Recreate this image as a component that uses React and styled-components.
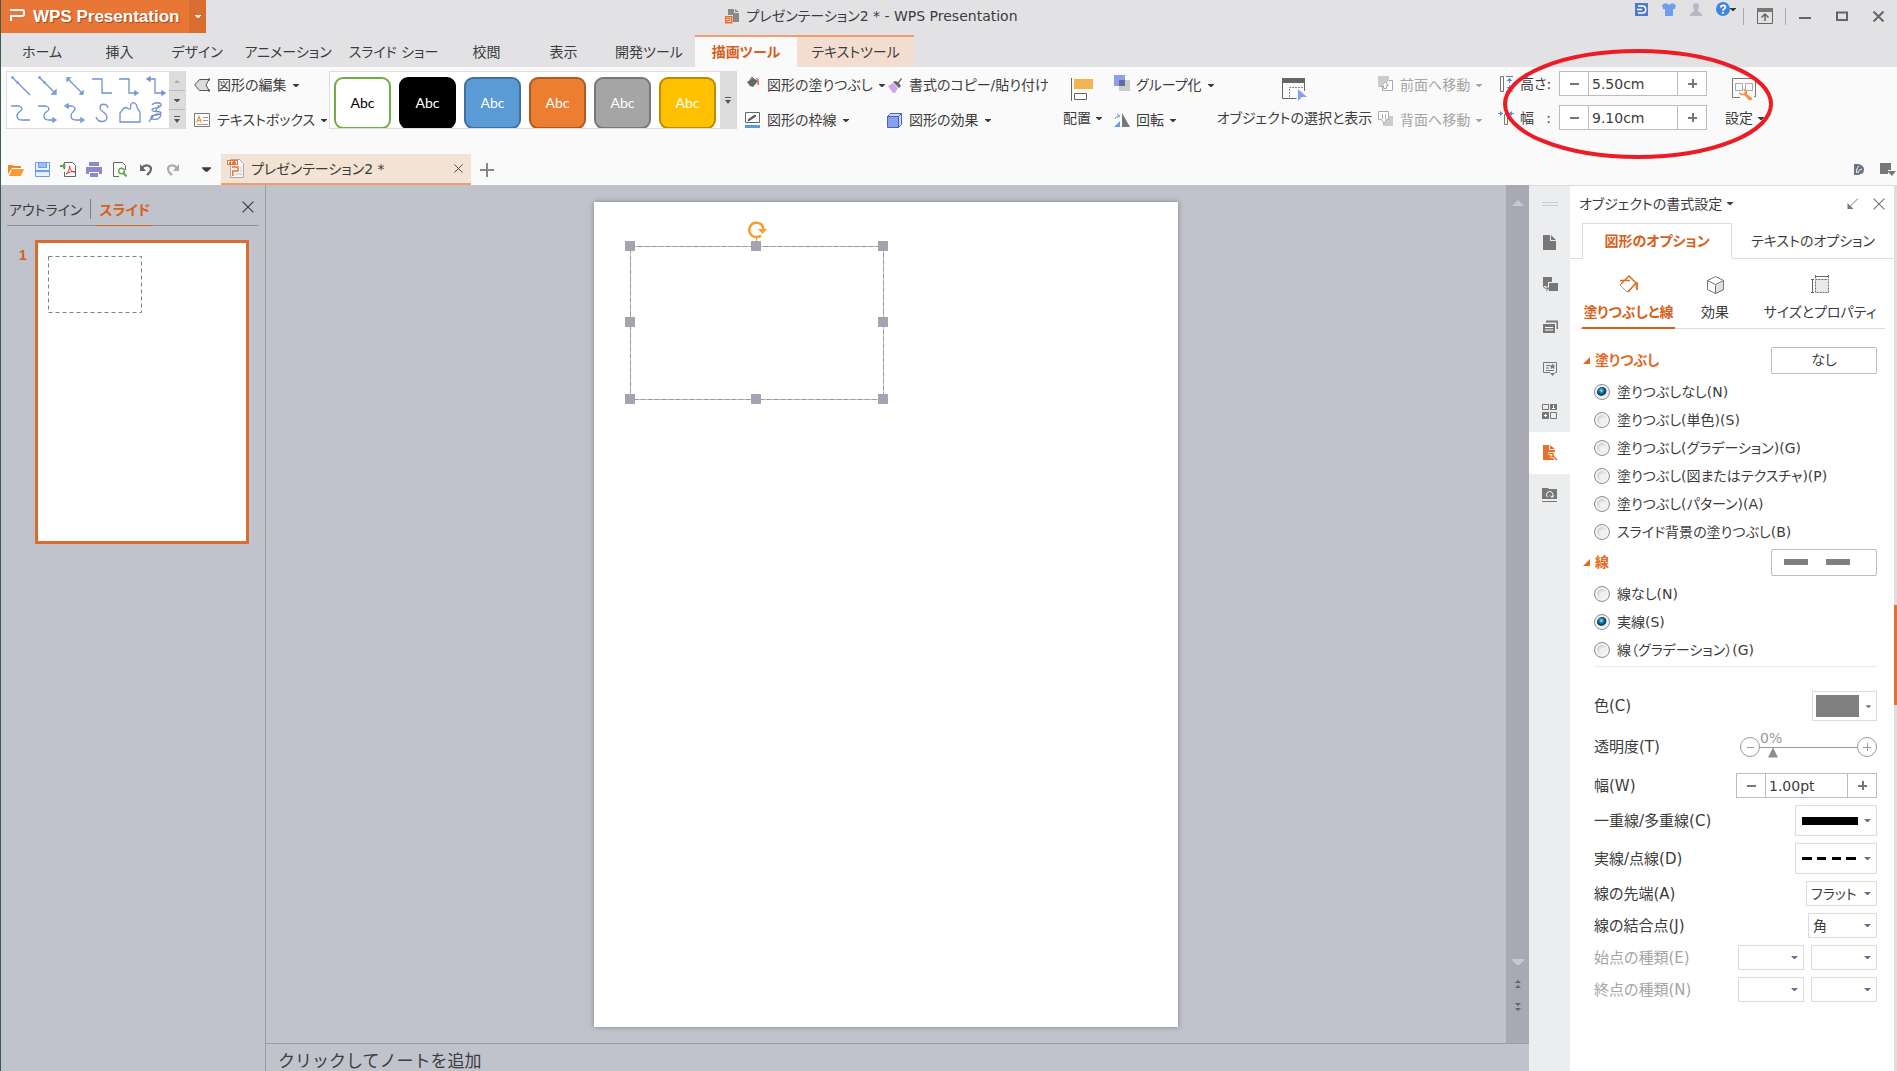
import React, { useState } from 'react';
import styled, { createGlobalStyle, css } from 'styled-components';

const GlobalStyle = createGlobalStyle`
	* {
		box-sizing: border-box;
	}
	body {
		margin: 0;
		background: #c0c3cc;
		color: #3c3c3c;
		font-family: 'DejaVu Sans', 'Noto Sans CJK JP', sans-serif;
		font-size: 14px;
		line-height: 20px;
		font-feature-settings: 'palt';
	}
	button,
	input,
	select {
		font: inherit;
		font-feature-settings: inherit;
		color: inherit;
		padding: 0;
		margin: 0;
		border: 0;
		border-radius: 0;
		background: none;
	}
	svg {
		display: block;
		flex: none;
	}
`;

const Window = styled.div`
	display: flex;
	flex-direction: column;
	height: 100vh;
	border-left: 1px solid #3e5c4c;
	overflow: hidden;
`;

/* title bar */

const TitleBar = styled.header`
	display: flex;
	height: 35px;
	background: #e2e2e4;
`;

const Brand = styled.button`
	display: flex;
	align-items: center;
	width: 205px;
	height: 33px;
	background: #e87636;
	color: white;
	font-family: 'Liberation Sans', sans-serif;
	font-weight: bold;
	font-size: 17px;
	text-shadow: 1px 1px 1px #a04a18;
`;

const BrandName = styled.span`
	flex: 1;
	padding-left: 8px;
	text-align: left;
	white-space: nowrap;
`;

const BrandMore = styled.span`
	display: flex;
	align-items: center;
	justify-content: center;
	width: 17px;
	height: 33px;
	background: #d96c2f;
`;

const WindowTitle = styled.h1`
	flex: 1;
	display: flex;
	align-items: center;
	justify-content: center;
	gap: 7px;
	margin: 0;
	padding: 0 98px 3px 0;
	font-size: 14px;
	font-weight: normal;
	white-space: nowrap;
`;

const AccountTools = styled.div`
	display: flex;
	gap: 14px;
	padding-top: 1px;
	height: 17px;
`;

const WindowButtons = styled.div`
	display: flex;
	align-items: center;
	height: 32px;
	padding-left: 7px;
`;

const WindowButton = styled.button`
	display: flex;
	align-items: center;
	justify-content: center;
	width: 37px;
	height: 24px;
	color: #666;
`;

const ModeButton = styled(WindowButton)`
	height: 17px;
	width: 43px;
	border: solid #aaa;
	border-width: 0 1px;
`;

const IconButton = styled.button`
	display: flex;
	align-items: center;
	justify-content: center;
`;

/* ribbon */

const Tabs = styled.nav`
	display: flex;
	height: 32px;
	background: #e2e2e4;
`;

const Tab = styled.button`
	width: ${({ $width }) => $width}px;
	border-top: 2px solid transparent;
	white-space: nowrap;

	${({ $context }) =>
		$context &&
		css`
			border-color: #ef9f6d;
			background: #f3ddd0;
		`}
	${({ $active }) =>
		$active &&
		css`
			background: #fafafa;
			color: #d8601a;
			font-weight: bold;
		`}
`;

const Ribbon = styled.div`
	display: flex;
	height: 87px;
	padding: 4px 0 0 5px;
	background: #fafafa;
`;

const Gallery = styled.div`
	display: flex;
	flex: none;
	height: 58px;
	margin-right: 8px;
	border: 1px solid #dcdcdc;
	background: white;
	overflow: hidden;
`;

const LineGrid = styled.div`
	display: grid;
	grid-template-columns: repeat(6, 27px);
	grid-template-rows: repeat(2, 27px);
	width: 162px;
	color: #6f93d2;
`;

const StyleRow = styled.div`
	display: flex;
	gap: 8px;
	width: 390px;
	padding: 5px 4px 0;
`;

const StyleSwatch = styled.button`
	flex: none;
	width: 57px;
	height: 52px;
	border: 2px solid ${({ $edge }) => $edge};
	border-radius: 9px;
	background: ${({ $fill }) => $fill};
	color: ${({ $ink }) => $ink || 'white'};
	font-family: Lato, sans-serif;
	font-size: 14px;
`;

const GalleryScroll = styled.div`
	display: flex;
	flex-direction: column;
	width: 16px;
	background: #dcdcdc;
`;

const ScrollStep = styled.button`
	flex: 1;
	display: flex;
	align-items: center;
	justify-content: center;
	color: ${({ $off }) => ($off ? '#aaa' : '#555')};

	& + & {
		border-top: 1px solid #bbb;
	}
`;

const Group = styled.div`
	display: flex;
	flex-direction: column;
	flex: none;
	gap: 7px;
	width: ${({ $width }) => $width}px;
	padding-left: ${({ $inset }) => $inset || 0}px;
`;

const Tool = styled.button`
	display: flex;
	align-items: center;
	gap: 6px;
	height: 28px;
	white-space: nowrap;
	color: ${({ disabled }) => (disabled ? '#a5a5a5' : 'inherit')};
`;

const BigTool = styled.button`
	display: flex;
	flex-direction: column;
	align-items: center;
	gap: 7px;
	flex: none;
	width: ${({ $width }) => $width}px;
	height: 60px;
	padding-top: 7px;
	white-space: nowrap;
`;

const BigToolLabel = styled.span`
	display: flex;
	align-items: center;
	gap: 5px;
`;

const SizeFields = styled.div`
	display: flex;
	flex-direction: column;
	flex: none;
	gap: 9px;
	width: 226px;
`;

const SizeField = styled.div`
	display: flex;
	align-items: center;
	gap: 6px;
`;

const SizeLabel = styled.label`
	display: flex;
	justify-content: space-between;
	width: 31px;
	margin-right: 2px;
	white-space: nowrap;
`;

const SpinBox = styled.span`
	display: flex;
	width: ${({ $width }) => $width}px;
	height: 25px;
	border: 1px solid #bcbcbc;
	background: white;

	& button {
		display: flex;
		align-items: center;
		justify-content: center;
		width: 28px;
		color: #777;
	}
	& input {
		flex: 1;
		min-width: 0;
		padding-left: 3px;
		border: solid #bcbcbc;
		border-width: 0 1px;
		outline: 0;
	}
`;

const Markup = styled.svg`
	position: absolute;
	left: 1501px;
	top: 47px;
	pointer-events: none;
`;

/* quick access bar */

const QuickBar = styled.div`
	display: flex;
	height: 31px;
	background: #fafafa;
`;

const QuickTools = styled.div`
	display: flex;
	align-items: center;
	width: 220px;
	padding-left: 2px;

	& button {
		width: 26px;
	}
	& button:last-child {
		margin-left: 8px;
	}
`;

const FileTab = styled.div`
	display: flex;
	align-items: center;
	gap: 6px;
	width: 250px;
	padding: 0 8px 0 6px;
	border-bottom: 2px solid #ef9f6d;
	background: #f2e3d4;
	white-space: nowrap;

	& button {
		margin-left: auto;
	}
`;

const AddTab = styled(IconButton)`
	width: 32px;
	color: #888;
`;

const QuickRight = styled.div`
	display: flex;
	align-items: center;
	gap: 16px;
	margin-left: auto;
	padding-right: 1px;
`;

/* body */

const Body = styled.div`
	display: flex;
	flex: 1;
	min-height: 0;
`;

const Outline = styled.aside`
	width: 265px;
	border-right: 1px solid #9b9da6;
	padding: 9px 7px 0 6px;
`;

const OutlineTabs = styled.div`
	display: flex;
	align-items: flex-start;
	height: 32px;
	border-bottom: 1px solid #8e9099;
`;

const OutlineTab = styled.button`
	height: 32px;
	padding: 0 2px;
	white-space: nowrap;
	border-bottom: 1px solid transparent;

	${({ $active }) =>
		$active &&
		css`
			color: #d8601a;
			font-weight: bold;
			border-color: #d8601a;
		`}
`;

const OutlineDivider = styled.span`
	flex: none;
	width: 1px;
	height: 20px;
	margin: 5px 6px 0;
	background: #7e8088;
`;

const CloseOutline = styled(IconButton)`
	margin: 7px 4px 0 auto;
`;

const SlideList = styled.ol`
	display: flex;
	gap: 8px;
	margin: 14px 0 0;
	padding: 0 0 0 12px;
	list-style: none;
`;

const SlideNumber = styled.span`
	width: 8px;
	padding-top: 5px;
	color: #d8601a;
	font-family: 'Liberation Sans', sans-serif;
	font-weight: bold;
	font-size: 14px;
`;

const SlideItem = styled.li`
	display: flex;
	gap: 8px;
`;

const Thumbnail = styled.div`
	width: 214px;
	height: 304px;
	padding: 13px 10px;
	border: 3px solid #d96c2f;
	background: white;
`;

const Center = styled.main`
	display: flex;
	flex-direction: column;
	flex: 1;
	min-width: 0;
`;

const Stage = styled.div`
	display: flex;
	flex: 1;
	min-height: 0;
`;

const Canvas = styled.div`
	flex: 1;
	display: flex;
	justify-content: center;
	padding: 17px 0 16px;
`;

const Page = styled.div`
	position: relative;
	width: 584px;
	background: white;
	box-shadow: 0 0 5px rgba(80, 84, 100, 0.6);
`;

const Shape = styled.svg`
	position: absolute;
	left: 31px;
	top: 15px;
`;

const Scroll = styled.div`
	display: flex;
	flex-direction: column;
	align-items: center;
	width: 23px;
	padding: 15px 0 32px;
	background: #a9a9b3;
	color: #c9c9cd;
`;

const ScrollTail = styled.div`
	display: flex;
	flex-direction: column;
	align-items: center;
	gap: 15px;
	margin-top: auto;
`;

const Dark = styled.span`
	color: #666;
`;

const Notes = styled.div`
	height: 28px;
	padding: 7px 12px 0;
	border-top: 1px solid #9b9da6;
	font-size: 17px;
	font-feature-settings: normal;
`;

const TaskStrip = styled.nav`
	display: flex;
	flex-direction: column;
	align-items: center;
	width: 41px;
	padding-top: 16px;
	border-top: 1px solid #dcdcde;
	background: #ecedef;
	color: #777;
`;

const Grip = styled.span`
	width: 16px;
	height: 4px;
	margin-bottom: 16px;
	border: solid #c9ccd8;
	border-width: 1px 0;
`;

const StripButton = styled(IconButton)`
	width: 41px;
	height: 42px;
	color: ${({ $active }) => ($active ? '#e8702a' : 'inherit')};
	background: ${({ $active }) => ($active ? 'white' : 'none')};
`;

/* format panel */

const Panel = styled.aside`
	width: 324px;
	border-top: 1px solid #dcdcde;
	background: white;
`;

const PanelTitle = styled.div`
	display: flex;
	align-items: center;
	gap: 5px;
	height: 37px;
	padding: 0 9px 2px;
	white-space: nowrap;
`;

const PanelActions = styled.span`
	display: flex;
	gap: 14px;
	margin-left: auto;
	color: #777;
`;

const OptionTabs = styled.div`
	display: flex;
	height: 36px;

	&::before {
		content: '';
		width: 12px;
		border-bottom: 1px solid #dcdcdc;
	}
`;

const OptionTab = styled.button`
	flex: ${({ $active }) => ($active ? '0 0 150px' : '1')};
	white-space: nowrap;
	border: 1px solid;
	border-color: ${({ $active }) =>
		$active ? '#dcdcdc #dcdcdc transparent' : 'transparent transparent #dcdcdc'};
	color: ${({ $active }) => ($active ? '#d8601a' : 'inherit')};
	font-weight: ${({ $active }) => ($active ? 'bold' : 'normal')};
`;

const SubTabs = styled.div`
	display: flex;
	justify-content: space-between;
	height: 70px;
	margin: 0 9px 0 10px;
	padding-left: 2px;
	border-bottom: 1px solid #dcdcdc;
`;

const SubTab = styled.button`
	display: flex;
	flex-direction: column;
	align-items: center;
	justify-content: flex-end;
	gap: 8px;
	min-width: ${({ $width }) => $width}px;
	height: 70px;
	padding-bottom: 5px;
	border-bottom: 2px solid transparent;
	white-space: nowrap;

	${({ $active }) =>
		$active &&
		css`
			color: #d8601a;
			font-weight: bold;
			border-color: #d8601a;
		`}
`;

const Section = styled.section`
	padding: 0 17px 0 13px;
	margin-top: ${({ $top }) => $top}px;
`;

const SectionHead = styled.div`
	display: flex;
	align-items: center;
	gap: 5px;
	height: 28px;
	margin-bottom: 4px;
	color: #e06a24;
`;

const SectionTitle = styled.h2`
	flex: 1;
	margin: 0;
	font-size: 14px;
	white-space: nowrap;
`;

const PreviewButton = styled.button`
	display: flex;
	align-items: center;
	justify-content: center;
	width: 106px;
	height: 27px;
	border: 1px solid #bcbcbc;
	border-radius: 2px;
	color: #3c3c3c;
`;

const RadioRow = styled.label`
	display: flex;
	align-items: center;
	gap: 7px;
	height: 28px;
	padding-left: 11px;
	white-space: nowrap;
`;

const Radio = styled.input.attrs({ type: 'radio' })`
	appearance: none;
	width: 16px;
	height: 16px;
	border: 1px solid #8e8f8f;
	border-radius: 50%;
	background: radial-gradient(circle at 60% 60%, #f0f1f3 25%, #c4c7cb 62%);
	box-shadow: inset 0 0 0 2px #f4f4f4;

	&:checked {
		background: radial-gradient(circle at 45% 40%, #a8e4fb 0, #2490c8 16%, #0d3a5c 36%, #0d3a5c 42%, #e4e6e8 48%);
	}
`;

const Fields = styled.div`
	display: flex;
	flex-direction: column;
	gap: 7px;
	margin: 2px 17px 0 24px;
	padding-top: 24px;
	border-top: 1px solid #ebebeb;
`;

const Field = styled.div`
	display: flex;
	align-items: center;
	gap: 7px;
	height: ${({ $height }) => $height || 25}px;
	color: ${({ $off }) => ($off ? '#a5a5a5' : 'inherit')};
`;

const FieldLabel = styled.label`
	flex: 1;
	font-size: 15px;
	white-space: nowrap;
`;

const DropButton = styled.button`
	display: flex;
	align-items: center;
	justify-content: space-between;
	width: ${({ $width }) => $width}px;
	height: ${({ $height }) => $height}px;
	padding: 0 5px 0 ${({ $inset }) => $inset}px;
	border: 1px solid #dcdcdc;
	color: #66708c;
`;

const ColorChip = styled.span`
	width: 43px;
	height: 22px;
	background: #808080;
`;

const SelectBox = styled.span`
	display: grid;
	align-items: center;
	width: ${({ $width }) => $width}px;
	height: 25px;
	border: 1px solid #dcdcdc;

	& > * {
		grid-area: 1 / 1;
	}
	& select {
		appearance: none;
		width: 100%;
		height: 23px;
		padding-left: 4px;
		outline: 0;
		opacity: 1;
	}
	& svg {
		justify-self: end;
		margin-right: 5px;
		color: #66708c;
		pointer-events: none;
	}
`;

const SliderBox = styled.span`
	position: relative;
	display: flex;
	align-items: center;
	width: 137px;
	color: #999;
`;

const Rail = styled.span`
	flex: 1;
	display: flex;
	align-items: center;
	height: 22px;
	padding: 0 8px;
	background: linear-gradient(#999, #999) center / 100% 1px no-repeat;
`;

const Range = styled.input.attrs({ type: 'range' })`
	appearance: none;
	width: 100%;
	height: 22px;

	&::-webkit-slider-thumb {
		appearance: none;
		width: 10px;
		height: 10px;
		margin-top: 11px;
		background: #8e8e8e;
		clip-path: polygon(50% 0, 100% 100%, 0 100%);
	}
`;

const RangeValue = styled.output`
	position: absolute;
	left: 20px;
	top: -8px;
`;

const EdgeScroll = styled.div`
	width: 3px;
	padding-top: 420px;
	background: #dedee0;

	&::before {
		content: '';
		display: block;
		height: 100px;
		background: #e8702a;
	}
`;

/* icons */

const Caret = ({ w = 6, h = 3 }) => (
	<svg width={w} height={h} viewBox="0 0 6 3" fill="currentColor">
		<path d="M0 0h6v.6L3.6 3H2.4L0 .6z" />
	</svg>
);

const CaretUp = ({ w = 6, h = 3 }) => (
	<svg width={w} height={h} viewBox="0 0 6 3" fill="currentColor">
		<path d="M3 0l3 3H0z" />
	</svg>
);

const MoreCaret = () => (
	<svg width="6" height="7" fill="currentColor">
		<path d="M0 0h6v1H0zM0 3h6L3 7z" />
	</svg>
);

const Cross = ({ size = 10, stroke = 1 }) => (
	<svg width={size} height={size} viewBox="0 0 10 10" fill="none" stroke="currentColor" strokeWidth={stroke}>
		<path d="M.5 .5l9 9M9.5 .5l-9 9" />
	</svg>
);

const Minus = () => (
	<svg width="9" height="9" fill="currentColor">
		<path d="M0 4h9v2H0z" />
	</svg>
);

const Plus = () => (
	<svg width="9" height="9" fill="currentColor">
		<path d="M0 4h9v2H0zM4 0h2v9H4z" />
	</svg>
);

const LINES = [
	<path d="M4 4l18 18M4 4h1v1H4zM9 9h1v1H9z" />,
	<path d="M4 4l16 16M4 4h1v1H4zM9 9h1v1H9zM17 21h4v-4z" />,
	<path d="M6 6l14 14M5 8V5h3zM18 21h3v-3z" />,
	<path d="M3 6h10v14h10" />,
	<path d="M3 6h10v14h7M19 18l3 2-3 2z" />,
	<path d="M5 6h7v14h9M7 4L4 6l3 2zM19 18l3 2-3 2z" />,
	<path d="M3 6h8q3 1 3 3c0 3-5 2-5 7q0 4 5 4h8" />,
	<path d="M3 6h8q3 1 3 3c0 3-5 2-5 7q0 4 5 4h5M18 18l3 2-3 2z" />,
	<path d="M5 6h5q3 1 3 3c0 3-4 2-4 7q0 4 5 4h5M6 4L3 6l3 2zM19 18l3 2-3 2z" />,
	<path d="M19 8c-1-5-8-5-8 0 0 4 7 4 7 9 0 6-9 6-11 0" />,
	<path d="M4 22v-9l4-5c2-2 4 2 6 1s-1-4 2-6c2-1 5 1 5 4 0 2 2 3 3 5v10z" />,
	<path d="M9 5c2-3 9-3 9 0 0 4-9 2-9 5s9 0 9 3-10 1-10 4 6 3 8 1 3-4-1-4-7 4-9 8M16 5l-4 7" />,
];

const LineIcon = ({ children }) => (
	<svg width="26" height="26" fill="none" stroke="currentColor" strokeWidth="1.3">
		{children}
	</svg>
);

const EditShapeIcon = () => (
	<svg width="17" height="14" fill="#dcdcdc" stroke="#555">
		<path d="M.7 7L5.5 1.5H15L12 7l3 5.5H5.5z" />
		<path d="M14 .5h2v2h-2zM14 11.5h2v2h-2z" fill="#555" stroke="none" />
	</svg>
);

const TextBoxIcon = () => (
	<svg width="17" height="14" fill="none">
		<path d="M.5 .5h15v13H.5z" fill="white" stroke="#777" />
		<path d="M2.5 9.500l2.500-6 2.500 6M3.500 7.500h3" stroke="#e8924a" strokeWidth="1.2" />
		<path d="M9 4.500h5M9 7.500h5M3 11.500h11" stroke="#999" />
	</svg>
);

const FillIcon = () => (
	<svg width="16" height="18">
		<path d="M2 6l6-4 5 3-5 6-3-1z" fill="#666" />
		<path d="M5 4l2-3 3 3" fill="none" stroke="#666" />
		<path d="M11 2c3 0 3 2 3 7h-2c1-3 0-5-1-7z" fill="#e4696e" />
	</svg>
);

const OutlineIcon = () => (
	<svg width="16" height="16">
		<path d="M.5 .5h14v10H.5z" fill="white" stroke="#666" />
		<path d="M3 9l1-2 6-4 1 1-6 4z" fill="#555" stroke="#555" />
		<path d="M0 13h15v3H0z" fill="#5b9bd5" />
	</svg>
);

const BrushIcon = () => (
	<svg width="16" height="15">
		<path d="M1 8l5-3 5 5-3 5H6z" fill="#cda6ee" />
		<path d="M6 4l2-1 3 1 3-4 1 1-3 4 2 3-2 2z" fill="#666" />
	</svg>
);

const CubeIcon = () => (
	<svg width="16" height="15" stroke="#4a62b8">
		<path d="M.5 3.500h11v11H.5z" fill="#86a1ea" />
		<path d="M.5 3.500l3-3h11v11l-3 3v-11z" fill="#cbd7f8" />
		<path d="M11.5 3.500l3-3" />
	</svg>
);

const AlignIcon = () => (
	<svg width="23" height="23" fill="none">
		<path d="M.5 0v23" stroke="#666" />
		<path d="M3 1h19v10H3z" fill="#f3b553" />
		<path d="M3.5 15.500h12v6h-12z" fill="white" stroke="#666" />
	</svg>
);

const GroupIcon = () => (
	<svg width="16" height="20">
		<path d="M5 5h11v11H5z" fill="#ccc" />
		<path d="M0 0h11v11H0z" fill="#8aa2e3" />
		<path d="M5 5h6v6H5z" fill="#5f6fa6" />
	</svg>
);

const RotateIcon = () => (
	<svg width="16" height="14">
		<path d="M0 14l6-6v6z" fill="#6b9bea" />
		<path d="M8 0v14h8z" fill="#777" />
		<path d="M1 6c1-3 2-3 4-3M3 .8L6 3 3 5" fill="none" stroke="#6b9bea" />
	</svg>
);

const SelectionIcon = () => (
	<svg width="25" height="23" fill="none">
		<path d="M.5 1v19.500h14M22.500 1v12" stroke="#666" />
		<path d="M0 0h23v5H0z" fill="#666" />
		<path d="M7.500 19V9.500H21" stroke="#888" strokeDasharray="2 1" />
		<path d="M16 11l9 8h-5l-4 4z" fill="#86a1ea" />
	</svg>
);

const FrontIcon = () => (
	<svg width="16" height="18">
		<path d="M0 0h11v8H6v3H0z" fill="#ccc" />
		<path d="M4.500 10v4.500h10v-10H11M3 10.500l4.500-5 3 4h-2v3h-3v-2z" fill="white" stroke="#aaa" />
	</svg>
);

const BackIcon = () => (
	<svg width="16" height="18">
		<path d="M5 5h10v10H5z" fill="#ccc" />
		<path d="M.5 .5h10v8h-2L6 12.500l-2.500-4h-3z" fill="white" stroke="#aaa" />
		<path d="M4.500 3v5M7.500 3v5" stroke="#aaa" />
	</svg>
);

const HeightIcon = () => (
	<svg width="16" height="16" viewBox="-2 0 16 16" fill="none">
		<path d="M.5 .5h3v15h-3zM6 .5h7M6 15.500h7" stroke="#777" />
		<path d="M9.500 2v12" stroke="#6b8fe0" strokeDasharray="5 2" />
		<path d="M6.500 5l3-3 3 3zM6.500 11l3 3 3-3z" fill="#5c86e0" />
	</svg>
);

const WidthIcon = () => (
	<svg width="16" height="14" fill="none">
		<path d="M6.500 3.500h3v10h-3z" stroke="#777" />
		<path d="M0 2.500h5M11 2.500h5" stroke="#5c86e0" />
		<path d="M2 0l3 2.500L2 5zM14 0l-3 2.500L14 5z" fill="#5c86e0" />
	</svg>
);

const SettingsIcon = () => (
	<svg width="25" height="23" fill="none">
		<path d="M8 19.500H.5V.5h23v18H22" stroke="#777" />
		<path d="M3.500 5.500h7v7h-7zM13.500 5.500h7v7h-7z" stroke="#aaa" />
		<path d="M7 14c0 3 3 4 5 3l5 5c2 1 4-1 3-2l-5-4c1-3-1-5-4-5l2 3-2 2z" fill="#ef9350" />
	</svg>
);

const BrandIcon = () => (
	<svg width="24" height="33" fill="none" stroke="white" strokeWidth="2">
		<path d="M9 10h12q2 0 2 2v2q0 2-2 2H10v5" />
	</svg>
);

const DocIcon = () => (
	<svg width="14" height="15">
		<path d="M3 0h6v4h5v9H8V6H3z" fill="#888" />
		<path d="M10 0l4 3h-4z" fill="#888" />
		<path d="M.75 7.750h6v6h-6z" fill="none" stroke="#e8702a" strokeWidth="1.5" />
		<path d="M2 9.500h3v2H2v2" fill="none" stroke="#e8702a" />
	</svg>
);

const SyncIcon = () => (
	<svg width="13" height="13" fill="none" stroke="white" strokeWidth="1.5">
		<path d="M0 0h13v13H0z" fill="#4e7bc8" stroke="none" />
		<path d="M3 3h4c5 0 5 7 0 7H3M2 6.500h5" />
	</svg>
);

const ShirtIcon = () => (
	<svg width="14" height="13" fill="#6f9fec">
		<path d="M0 2l4-2q3 3 6 0l4 2-1 4h-2v7H3V6H1z" />
	</svg>
);

const UserIcon = () => (
	<svg width="12" height="13" fill="#b5bbc4">
		<path d="M3 3a3 3 0 016 0c0 2-1 3-1 5l4 3v2H0v-2l4-3c0-2-1-3-1-5z" />
	</svg>
);

const HelpIcon = () => (
	<svg width="14" height="14" fill="none" stroke="white" strokeWidth="1.8">
		<circle cx="7" cy="7" r="7" fill="#3f86dc" stroke="none" />
		<path d="M4.800 5.500C5 2.500 9.300 3 9.300 5.300 9.300 7 7 6.800 7 8.800M7 10v1.800" />
	</svg>
);

const ModeIcon = () => (
	<svg width="16" height="16" fill="none" stroke="#666">
		<path d="M.5 1.500h15v14H.5z" />
		<path d="M0 0h16v4H0z" fill="#777" stroke="none" />
		<path d="M8 13V7M4.500 9.500L8 6l3.500 3.500" strokeWidth="1.5" />
	</svg>
);

const OpenIcon = () => (
	<svg width="16" height="12">
		<path d="M0 10V1h5l1 1h7v2H4z" fill="#f08a24" />
		<path d="M1 12l3-7h12l-3 7z" fill="#f99b33" />
	</svg>
);

const SaveIcon = () => (
	<svg width="15" height="15" fill="none" stroke="#6e9bea">
		<path d="M.5 .5h14v14H.5z" fill="#e8f0fd" />
		<path d="M3.500 .5h8v5h-8z" fill="#9dbdf4" />
		<path d="M0 8h15v2H0z" fill="#6e9bea" stroke="none" />
	</svg>
);

const PdfIcon = () => (
	<svg width="17" height="15" fill="none">
		<path d="M4.500 7V.5h8l3 3v11h-11V10" stroke="#666" />
		<path d="M0 3h3V1l3 3-3 3V5H0z" fill="#5fa84a" />
		<path d="M6 12c2-1 4-5 3.500-8C10 8 12 10 15 10c-3-1-6 0-9 2z" stroke="#d8383a" />
	</svg>
);

const PrintIcon = () => (
	<svg width="16" height="15" fill="#8d88cc">
		<path d="M3 0h10v4H3zM0 5h16v7h-3v-2H3v2H0zM4 11h8v4H4z" />
	</svg>
);

const PreviewIcon = () => (
	<svg width="14" height="15" fill="none">
		<path d="M6 14.500H.5V.5h9l3 3V8" stroke="#666" />
		<circle cx="8.5" cy="9" r="2.8" stroke="#5fa84a" strokeWidth="1.4" />
		<path d="M10.500 11l3 3.500" stroke="#5fa84a" strokeWidth="2" />
	</svg>
);

const UndoIcon = () => (
	<svg width="13" height="13" fill="none" stroke="#666" strokeWidth="2.2">
		<path d="M2 5c3-4 9-3 9 1 0 3-2 4-4 6" />
		<path d="M0 1v7h6z" fill="#666" stroke="none" />
	</svg>
);

const RedoIcon = () => (
	<svg width="13" height="13" fill="none" stroke="#aaa" strokeWidth="2.2">
		<path d="M11 5C8 1 2 2 2 6c0 3 2 4 4 6" />
		<path d="M13 1v7H7z" fill="#aaa" stroke="none" />
	</svg>
);

const FileIcon = () => (
	<svg width="18" height="19" fill="none">
		<path d="M3.500 .5h9l4 4v14h-13z" fill="#f6f6f6" stroke="#aaa" />
		<path d="M0 1h11v5H0z" fill="#e87636" />
		<path d="M1.500 5V2.500h1.500M4.500 5V2.500H6M8 2.500h1.500V5" stroke="white" />
		<path d="M5 8h6v4H5.750v5" stroke="#e87636" strokeWidth="1.5" />
		<path d="M13 9h2M13 12h2M9 15h6" stroke="#bbb" />
	</svg>
);

const AddIcon = () => (
	<svg width="14" height="14" fill="currentColor">
		<path d="M6 0h2v14H6zM0 6h14v2H0z" />
	</svg>
);

const LeafIcon = () => (
	<svg width="10" height="11">
		<path d="M0 0h4q6 1 6 5.500T4 11H0z" fill="#6a7486" />
		<path d="M3 9c-1-3 0-5 2-7M4 9c0-2 1-3 4-4" stroke="white" fill="none" />
	</svg>
);

const PaneIcon = () => (
	<svg width="16" height="13">
		<path d="M0 0h11v7H8v4H0z" fill="#777" />
		<path d="M7 8h9l-4 5z" fill="#777" />
	</svg>
);

const STRIP = [
	['新規', <path d="M1 0h7v6h6v9H1zM9 0l5 5H9z" fill="currentColor" />],
	[
		'切り替え',
		<g>
			<path d="M1 0h9v5H6v4H1zM7 6h9v8H7z" fill="currentColor" />
			<path d="M1 9q1 3 5 2.500M4 9l3 2.500L4 14" fill="none" stroke="currentColor" />
		</g>,
	],
	[
		'レイアウト',
		<g fill="none" stroke="currentColor">
			<path d="M4 2.500h11.500V10" strokeWidth="2" />
			<path d="M1 5h12v9H1z" fill="currentColor" stroke="none" />
			<path d="M3 8.500h8M3 11h8" stroke="white" />
		</g>,
	],
	[
		'アニメーション',
		<g fill="none" stroke="currentColor">
			<path d="M8 11.500H1.500v-10h13v10H13" />
			<path d="M4 4.500h4M4 7h3M4 9.500h8" />
			<path d="M10.500 2.500l1 2h2l-1.500 1.500.5 2-2-1-2 1 .5-2L7.500 4.500h2z" fill="currentColor" stroke="none" />
			<path d="M8 12h5l-2.500 3z" fill="currentColor" stroke="none" />
		</g>,
	],
	[
		'クリップアート',
		<g fill="none" stroke="currentColor">
			<path d="M.5 1.500h6v5h-6zM8.500 9.500h6v6h-6z" />
			<path d="M8 1h7v6H8zM0 9h7v7H0z" fill="currentColor" stroke="none" />
			<path d="M10 5.500h3M11.500 2v3M2 12.500h3M3.500 11v3" stroke="white" />
		</g>,
	],
	[
		'書式設定',
		<g>
			<path d="M1 0h6v5h6v10H1zM8 0l5 4H8z" fill="currentColor" />
			<path d="M6.500 8.500h5v3h-3M11 11l4 4" fill="none" stroke="white" strokeWidth="3" />
			<path d="M7 8.500h4v3H9M11 11l4 4" fill="none" stroke="currentColor" strokeWidth="1.5" />
		</g>,
	],
	[
		'バックアップ',
		<g>
			<path d="M0 1h6l1 1h8v10H0z" fill="currentColor" />
			<path d="M0 14.500h15" stroke="currentColor" />
			<path d="M5.500 10A3.200 3.200 0 1110 10M8 8.500l2 2 2-2" fill="none" stroke="white" />
		</g>,
	],
];

const FillLineIcon = () => (
	<svg width="20" height="19" fill="none" stroke="#e06a24">
		<path d="M1 10l9-9 7 7-9 9z" stroke="#999" />
		<path d="M2 9l8-8 7 7-8 9M1 5.500h10" strokeWidth="1.5" />
		<path d="M16 7h3v8h-2z" fill="#e87636" stroke="none" />
	</svg>
);

const EffectIcon = () => (
	<svg width="17" height="18" fill="none" stroke="#777">
		<path d="M.5 4.500l8-4 8 4v9l-8 4-8-4z" />
		<path d="M8.500 8.500l8-4v9l-8 4z" fill="#e2e0e0" />
		<path d="M.5 4.500l8 4" />
	</svg>
);

const SizeIcon = () => (
	<svg width="18" height="19" fill="none" stroke="#666">
		<path d="M4.500 4.500h13v13h-13z" fill="#e9e9e9" strokeDasharray="2 1" />
		<path d="M1.500 4v14M0 4.500h3M0 17.500h3M4 1.500h14M4.500 0v3M17.500 0v3" />
	</svg>
);

const DockIcon = () => (
	<svg width="12" height="12" fill="none" stroke="currentColor">
		<path d="M11 .5L2 9.500" />
		<path d="M.5 5v6h6z" fill="currentColor" stroke="none" />
	</svg>
);

const Triangle = () => (
	<svg width="7" height="7" fill="#e06a24">
		<path d="M7 0v7H0z" />
	</svg>
);

const CircleStep = ({ plus }) => (
	<svg width="20" height="20" fill="none" stroke="#999">
		<circle cx="10" cy="10" r="9.5" />
		<path d={plus ? 'M6 10.500h8M10.500 6v8' : 'M7 10.500h7'} />
	</svg>
);

const DoubleArrow = ({ down }) => (
	<svg width="6" height="8" fill="currentColor">
		<path d={down ? 'M0 0h6L3 3zM0 5h6L3 8z' : 'M3 0l3 3H0zM3 5l3 3H0z'} />
	</svg>
);

const HANDLES = [
	[0, 0],
	[126, 0],
	[253, 0],
	[0, 76],
	[253, 76],
	[0, 153],
	[126, 153],
	[253, 153],
];

/* data */

const TABS = [
	['ホーム', 82],
	['挿入', 73],
	['デザイン', 82],
	['アニメーション', 100],
	['スライド ショー', 111],
	['校閲', 75],
	['表示', 79],
	['開発ツール', 92],
];

const STYLES = [
	{ $fill: 'white', $edge: '#70ad47', $ink: 'black' },
	{ $fill: 'black', $edge: 'black' },
	{ $fill: '#5b9bd5', $edge: '#41719c' },
	{ $fill: '#ed7d31', $edge: '#ae5a21' },
	{ $fill: '#a5a5a5', $edge: '#787878' },
	{ $fill: '#ffc000', $edge: '#bc8c00' },
];

const QUICK = [
	['開く', OpenIcon],
	['保存', SaveIcon],
	['PDF', PdfIcon],
	['印刷', PrintIcon],
	['印刷プレビュー', PreviewIcon],
	['元に戻す', UndoIcon],
	['やり直し', RedoIcon],
];

const FILLS = [
	'塗りつぶしなし(N)',
	'塗りつぶし(単色)(S)',
	'塗りつぶし(グラデーション)(G)',
	'塗りつぶし(図またはテクスチャ)(P)',
	'塗りつぶし(パターン)(A)',
	'スライド背景の塗りつぶし(B)',
];

const STROKES = ['線なし(N)', '実線(S)', '線（グラデーション）(G)'];

/* parts */

const ToolButton = ({ icon, label, menu, disabled }) => (
	<Tool disabled={disabled}>
		{icon}
		{label}
		{menu && <Caret />}
	</Tool>
);

const Spinner = ({ id, value, width }) => (
	<SpinBox $width={width}>
		<button aria-label="減らす">
			<Minus />
		</button>
		<input id={id} type="text" defaultValue={value} />
		<button aria-label="増やす">
			<Plus />
		</button>
	</SpinBox>
);

const RadioList = ({ name, items, initial }) => {
	const [value, setValue] = useState(initial);
	return items.map((item) => (
		<RadioRow key={item}>
			<Radio name={name} checked={value === item} onChange={() => setValue(item)} />
			{item}
		</RadioRow>
	));
};

const Dropdown = ({ id, label, options = [''], width, disabled }) => (
	<SelectBox $width={width}>
		<select id={id} aria-label={label} disabled={disabled}>
			{options.map((option) => (
				<option key={option}>{option}</option>
			))}
		</select>
		<Caret w={7} />
	</SelectBox>
);

const FormatPanel = () => (
	<Panel>
		<PanelTitle>
			オブジェクトの書式設定
			<Caret />
			<PanelActions>
				<IconButton aria-label="固定">
					<DockIcon />
				</IconButton>
				<IconButton aria-label="閉じる">
					<Cross size={12} />
				</IconButton>
			</PanelActions>
		</PanelTitle>
		<OptionTabs>
			<OptionTab $active>図形のオプション</OptionTab>
			<OptionTab>テキストのオプション</OptionTab>
		</OptionTabs>
		<SubTabs>
			<SubTab $active $width={93}>
				<FillLineIcon />
				塗りつぶしと線
			</SubTab>
			<SubTab $width={60}>
				<EffectIcon />
				効果
			</SubTab>
			<SubTab $width={130}>
				<SizeIcon />
				サイズとプロパティ
			</SubTab>
		</SubTabs>
		<Section $top={17}>
			<SectionHead>
				<Triangle />
				<SectionTitle>塗りつぶし</SectionTitle>
				<PreviewButton>なし</PreviewButton>
			</SectionHead>
			<RadioList name="fill" items={FILLS} initial={FILLS[0]} />
		</Section>
		<Section $top={2}>
			<SectionHead>
				<Triangle />
				<SectionTitle>線</SectionTitle>
				<PreviewButton aria-label="線">
					<svg width="80" height="6" fill="#808080">
						<path d="M0 0h24v6H0zM42 0h24v6H42z" />
					</svg>
				</PreviewButton>
			</SectionHead>
			<RadioList name="stroke" items={STROKES} initial={STROKES[1]} />
		</Section>
		<Fields>
			<Field $height={30}>
				<FieldLabel htmlFor="color">色(C)</FieldLabel>
				<DropButton id="color" $width={65} $height={30} $inset={3}>
					<ColorChip />
					<Caret w={5} />
				</DropButton>
			</Field>
			<Field $height={38}>
				<FieldLabel htmlFor="opacity">透明度(T)</FieldLabel>
				<SliderBox>
					<IconButton aria-label="減らす">
						<CircleStep />
					</IconButton>
					<Rail>
						<Range id="opacity" defaultValue={0} />
					</Rail>
					<IconButton aria-label="増やす">
						<CircleStep plus />
					</IconButton>
					<RangeValue htmlFor="opacity">0%</RangeValue>
				</SliderBox>
			</Field>
			<Field>
				<FieldLabel htmlFor="weight">幅(W)</FieldLabel>
				<Spinner id="weight" value="1.00pt" width={141} />
			</Field>
			<Field $height={31}>
				<FieldLabel htmlFor="compound">一重線/多重線(C)</FieldLabel>
				<DropButton id="compound" $width={82} $height={31} $inset={6}>
					<svg width="56" height="8">
						<path d="M0 0h56v8H0z" />
					</svg>
					<Caret w={7} />
				</DropButton>
			</Field>
			<Field $height={31}>
				<FieldLabel htmlFor="dash">実線/点線(D)</FieldLabel>
				<DropButton id="dash" $width={82} $height={31} $inset={6}>
					<svg width="56" height="3">
						<path d="M0 0h10v3H0zM15 0h9v3h-9zM30 0h9v3h-9zM44 0h10v3H44z" />
					</svg>
					<Caret w={7} />
				</DropButton>
			</Field>
			<Field>
				<FieldLabel htmlFor="cap">線の先端(A)</FieldLabel>
				<Dropdown id="cap" options={['フラット', '四角', '丸']} width={71} />
			</Field>
			<Field>
				<FieldLabel htmlFor="join">線の結合点(J)</FieldLabel>
				<Dropdown id="join" options={['角', '丸', '面取り']} width={69} />
			</Field>
			<Field $off>
				<FieldLabel htmlFor="begin">始点の種類(E)</FieldLabel>
				<Dropdown id="begin" width={66} disabled />
				<Dropdown label="始点のサイズ" width={66} disabled />
			</Field>
			<Field $off>
				<FieldLabel htmlFor="end">終点の種類(N)</FieldLabel>
				<Dropdown id="end" width={66} disabled />
				<Dropdown label="終点のサイズ" width={66} disabled />
			</Field>
		</Fields>
	</Panel>
);

const RibbonTools = () => (
	<Ribbon>
		<Gallery>
			<LineGrid>
				{LINES.map((line, index) => (
					<IconButton key={index} aria-label={`線 ${index + 1}`}>
						<LineIcon>{line}</LineIcon>
					</IconButton>
				))}
			</LineGrid>
			<GalleryScroll>
				<ScrollStep $off aria-label="上へ">
					<CaretUp />
				</ScrollStep>
				<ScrollStep aria-label="下へ">
					<Caret />
				</ScrollStep>
				<ScrollStep aria-label="その他">
					<MoreCaret />
				</ScrollStep>
			</GalleryScroll>
		</Gallery>
		<Group $width={135}>
			<ToolButton icon={<EditShapeIcon />} label="図形の編集" menu />
			<ToolButton icon={<TextBoxIcon />} label="テキストボックス" menu />
		</Group>
		<Gallery>
			<StyleRow>
				{STYLES.map((style) => (
					<StyleSwatch key={style.$fill} {...style}>
						Abc
					</StyleSwatch>
				))}
			</StyleRow>
			<GalleryScroll>
				<ScrollStep aria-label="その他">
					<MoreCaret />
				</ScrollStep>
			</GalleryScroll>
		</Gallery>
		<Group $width={142}>
			<ToolButton icon={<FillIcon />} label="図形の塗りつぶし" menu />
			<ToolButton icon={<OutlineIcon />} label="図形の枠線" menu />
		</Group>
		<Group $width={175}>
			<ToolButton icon={<BrushIcon />} label="書式のコピー/貼り付け" />
			<ToolButton icon={<CubeIcon />} label="図形の効果" menu />
		</Group>
		<BigTool $width={41}>
			<AlignIcon />
			<BigToolLabel>
				配置
				<Caret />
			</BigToolLabel>
		</BigTool>
		<Group $width={119} $inset={11}>
			<ToolButton icon={<GroupIcon />} label="グループ化" menu />
			<ToolButton icon={<RotateIcon />} label="回転" menu />
		</Group>
		<BigTool $width={145}>
			<SelectionIcon />
			<BigToolLabel>オブジェクトの選択と表示</BigToolLabel>
		</BigTool>
		<Group $width={131} $inset={11}>
			<ToolButton icon={<FrontIcon />} label="前面へ移動" menu disabled />
			<ToolButton icon={<BackIcon />} label="背面へ移動" menu disabled />
		</Group>
		<SizeFields>
			<SizeField>
				<HeightIcon />
				<SizeLabel htmlFor="height">高さ:</SizeLabel>
				<Spinner id="height" value="5.50cm" width={148} />
			</SizeField>
			<SizeField>
				<WidthIcon />
				<SizeLabel htmlFor="width">
					幅<span>:</span>
				</SizeLabel>
				<Spinner id="width" value="9.10cm" width={148} />
			</SizeField>
		</SizeFields>
		<BigTool $width={41}>
			<SettingsIcon />
			<BigToolLabel>
				設定
				<Caret />
			</BigToolLabel>
		</BigTool>
	</Ribbon>
);

const App = () => (
	<Window>
		<GlobalStyle />
		<TitleBar>
			<Brand>
				<BrandIcon />
				<BrandName>WPS Presentation</BrandName>
				<BrandMore>
					<Caret />
				</BrandMore>
			</Brand>
			<WindowTitle>
				<DocIcon />
				プレゼンテーション2 * - WPS Presentation
			</WindowTitle>
			<AccountTools>
				<IconButton aria-label="同期">
					<SyncIcon />
				</IconButton>
				<IconButton aria-label="スキン">
					<ShirtIcon />
				</IconButton>
				<IconButton aria-label="ユーザー">
					<UserIcon />
				</IconButton>
				<IconButton aria-label="ヘルプ">
					<HelpIcon />
					<Caret />
				</IconButton>
			</AccountTools>
			<WindowButtons>
				<ModeButton aria-label="リボン">
					<ModeIcon />
				</ModeButton>
				<WindowButton aria-label="最小化">
					<svg width="12" height="12" fill="currentColor">
						<path d="M0 7h12v2H0z" />
					</svg>
				</WindowButton>
				<WindowButton aria-label="最大化">
					<svg width="12" height="10" fill="none" stroke="currentColor" strokeWidth="2">
						<path d="M1 1.500h10V9H1z" />
					</svg>
				</WindowButton>
				<WindowButton aria-label="閉じる">
					<Cross size={11} stroke={1.8} />
				</WindowButton>
			</WindowButtons>
		</TitleBar>
		<Tabs>
			{TABS.map(([name, width]) => (
				<Tab key={name} $width={width}>
					{name}
				</Tab>
			))}
			<Tab $width={102} $context $active>
				描画ツール
			</Tab>
			<Tab $width={117} $context>
				テキストツール
			</Tab>
		</Tabs>
		<RibbonTools />
		<QuickBar>
			<QuickTools>
				{QUICK.map(([name, Icon]) => (
					<IconButton key={name} aria-label={name}>
						<Icon />
					</IconButton>
				))}
				<IconButton aria-label="カスタマイズ">
					<Caret w={9} h={5} />
				</IconButton>
			</QuickTools>
			<FileTab>
				<FileIcon />
				プレゼンテーション2 *
				<IconButton aria-label="閉じる">
					<Cross size={9} />
				</IconButton>
			</FileTab>
			<AddTab aria-label="新しいタブ">
				<AddIcon />
			</AddTab>
			<QuickRight>
				<LeafIcon />
				<PaneIcon />
			</QuickRight>
		</QuickBar>
		<Body>
			<Outline>
				<OutlineTabs>
					<OutlineTab>アウトライン</OutlineTab>
					<OutlineDivider />
					<OutlineTab $active>スライド</OutlineTab>
					<CloseOutline aria-label="閉じる">
						<Cross size={12} />
					</CloseOutline>
				</OutlineTabs>
				<SlideList>
					<SlideItem>
						<SlideNumber>1</SlideNumber>
						<Thumbnail>
							<svg width="94" height="57" fill="none" stroke="#808080">
								<path d="M.5 .5h93v56H.5z" strokeDasharray="4 3" />
							</svg>
						</Thumbnail>
					</SlideItem>
				</SlideList>
			</Outline>
			<Center>
				<Stage>
					<Canvas>
						<Page>
							<Shape width="264" height="190">
								<path d="M5.500 29.500h253v153H5.500z" fill="none" stroke="#ccc" />
								<path d="M5.500 29.500h253v153H5.500z" fill="none" stroke="#999" strokeDasharray="5 2" />
								<path d="M131.500 21v4" stroke="#f5a028" />
								<path d="M136 18.500A7.200 7.200 0 11138.700 13" fill="none" stroke="#f5a028" strokeWidth="2.5" />
								<path d="M133 12h9l-4.500 5z" fill="#f5a028" />
								{HANDLES.map(([x, y]) => (
									<rect key={`${x}-${y}`} x={x} y={y + 24} width="10" height="10" fill="#a2a5b0" />
								))}
							</Shape>
						</Page>
					</Canvas>
					<Scroll>
						<CaretUp w={12} h={6} />
						<ScrollTail>
							<Caret w={12} h={6} />
							<Dark>
								<DoubleArrow />
							</Dark>
							<Dark>
								<DoubleArrow down />
							</Dark>
						</ScrollTail>
					</Scroll>
				</Stage>
				<Notes>クリックしてノートを追加</Notes>
			</Center>
			<TaskStrip>
				<Grip />
				{STRIP.map(([name, icon]) => (
					<StripButton key={name} aria-label={name} $active={name === '書式設定'}>
						<svg width="16" height="16">{icon}</svg>
					</StripButton>
				))}
			</TaskStrip>
			<FormatPanel />
			<EdgeScroll />
		</Body>
		<Markup width="275" height="115" fill="none" stroke="#ed1c24" strokeWidth="4">
			<ellipse cx="137" cy="57" rx="133" ry="53" />
		</Markup>
	</Window>
);

export default App;
